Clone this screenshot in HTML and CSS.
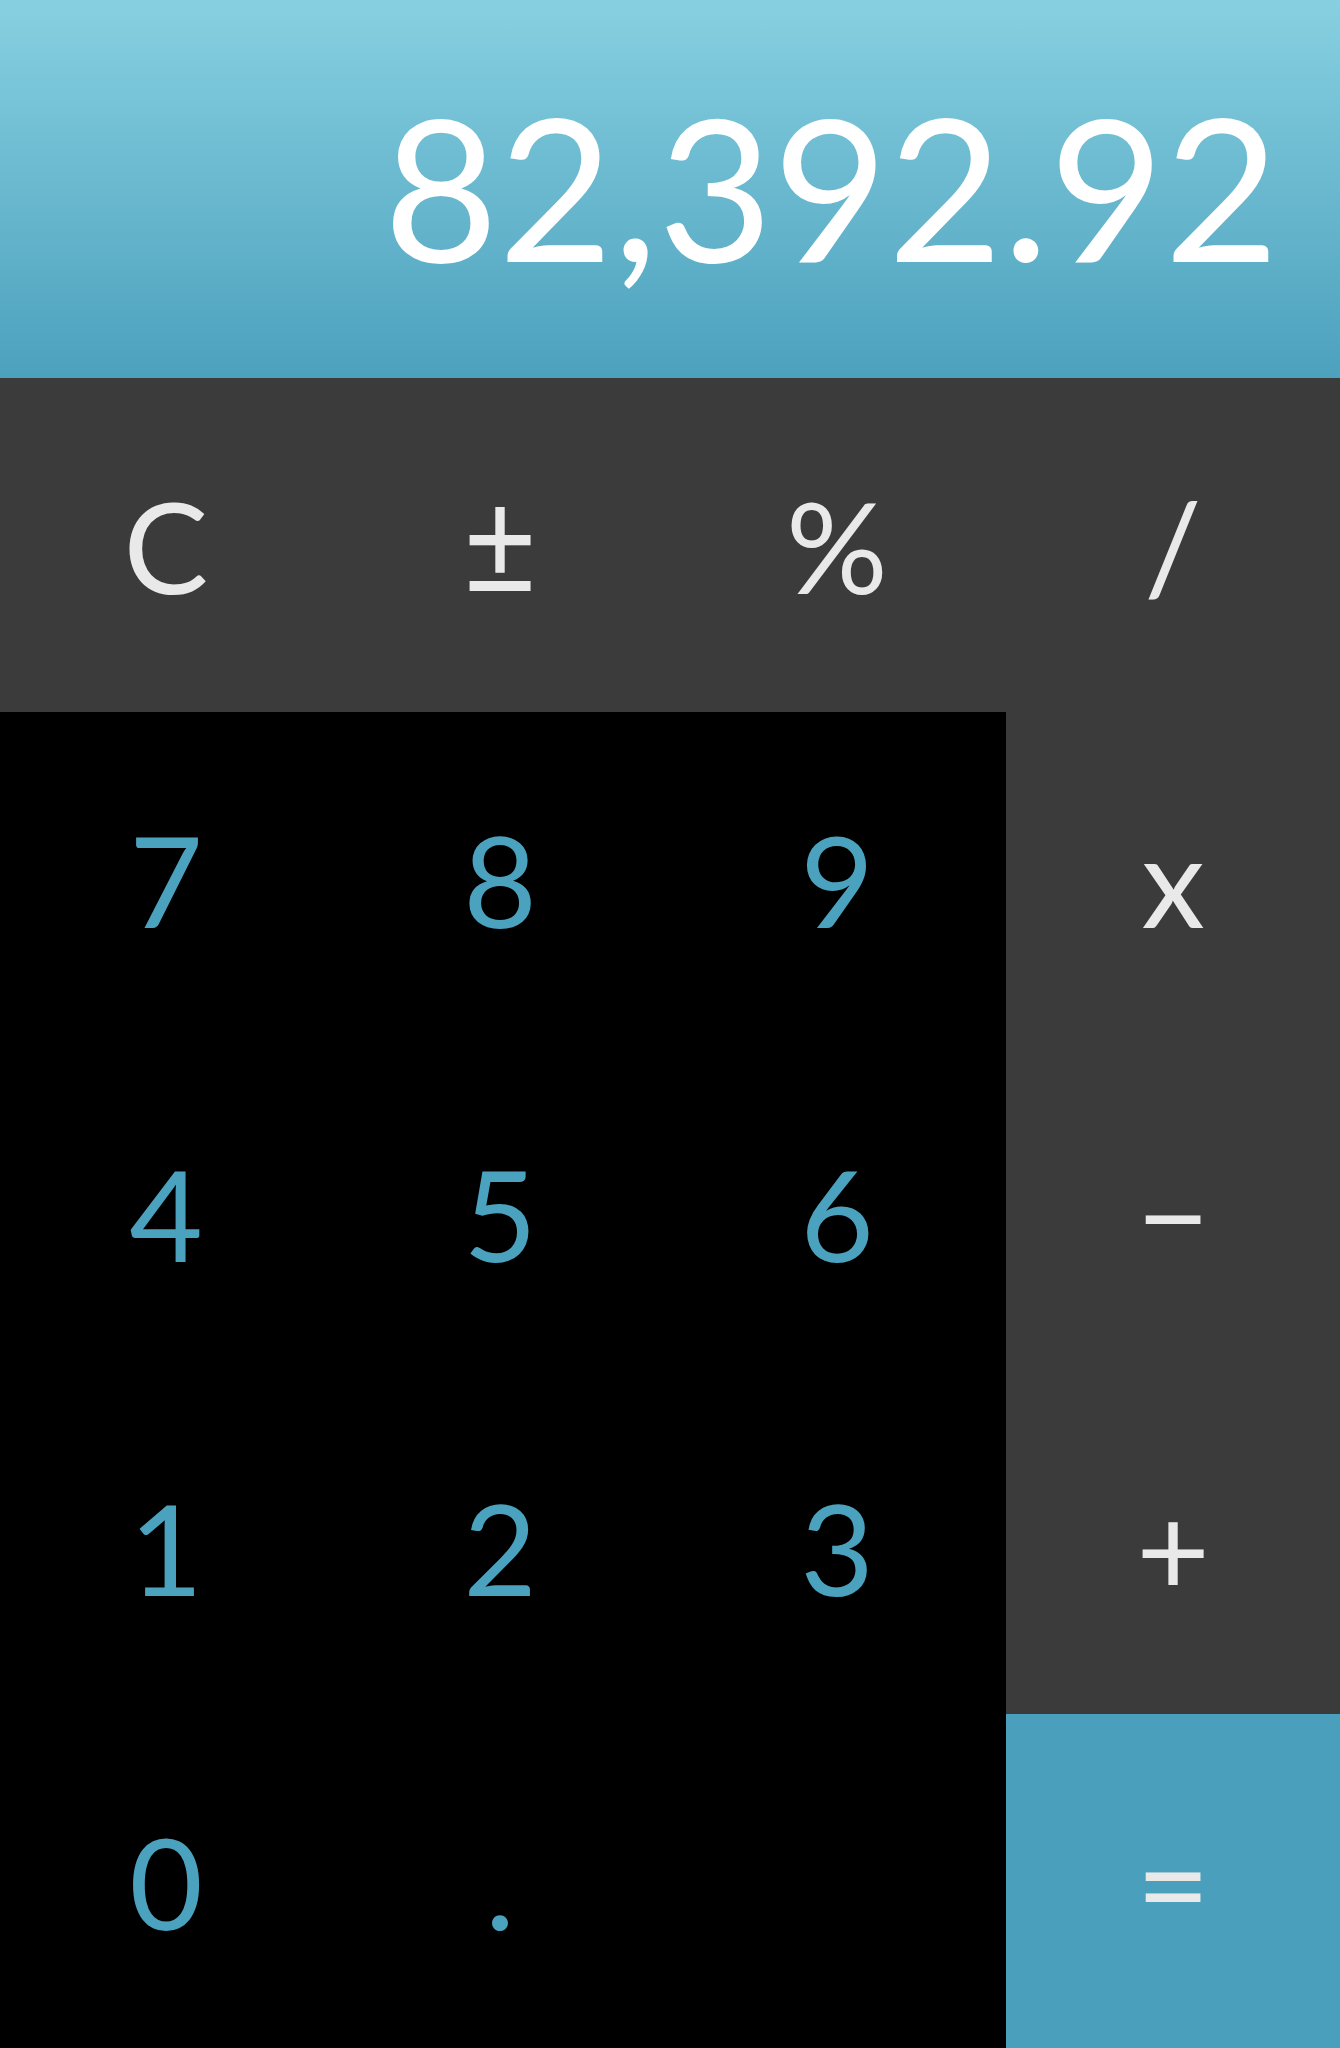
FILE: index.html
```html
<!DOCTYPE html>
<html>
<head>
<meta charset="utf-8">
<link rel="stylesheet" href="styles.css">
</head>
<body>
<div class="calc">
  <div class="display">82,392.92</div>
  <div class="keys">
    <div class="key fn">C</div>
    <div class="key fn"><span class="pm">±</span></div>
    <div class="key fn">%</div>
    <div class="key fn">/</div>
    <div class="key num">7</div>
    <div class="key num">8</div>
    <div class="key num">9</div>
    <div class="key op">x</div>
    <div class="key num">4</div>
    <div class="key num">5</div>
    <div class="key num">6</div>
    <div class="key op">−</div>
    <div class="key num">1</div>
    <div class="key num">2</div>
    <div class="key num">3</div>
    <div class="key op">+</div>
    <div class="key num">0</div>
    <div class="key num">.</div>
    <div class="key num"></div>
    <div class="key eq">=</div>
  </div>
</div>
</body>
</html>
```

FILE: styles.css
```css
html, body {
  margin: 0;
  padding: 0;
  background: #000;
}
.calc {
  width: 1340px;
  height: 2048px;
  display: flex;
  flex-direction: column;
  font-family: Lato, "Open Sans", sans-serif;
}
.display {
  height: 378px;
  box-sizing: border-box;
  background: linear-gradient(to bottom, #87d0e1, #4ca1bd);
  color: #fff;
  font-size: 198px;
  display: flex;
  align-items: center;
  justify-content: flex-end;
  padding-right: 61px;
  padding-bottom: 7px;
}
.keys {
  flex: 1;
  display: grid;
  grid-template-columns: 332px 336px 338px 334px;
  grid-template-rows: repeat(5, 1fr);
}
.key {
  display: flex;
  align-items: center;
  justify-content: center;
  font-size: 127px;
}
.pm {
  display: inline-block;
  transform: scaleY(1.18);
  transform-origin: 50% 72%;
}
.fn, .op {
  background: #3b3b3b;
  color: #e9e9e9;
}
.num {
  background: #000;
  color: #4ba2bf;
}
.eq {
  background: #4a9fbc;
  color: #e9e9e9;
}
```
